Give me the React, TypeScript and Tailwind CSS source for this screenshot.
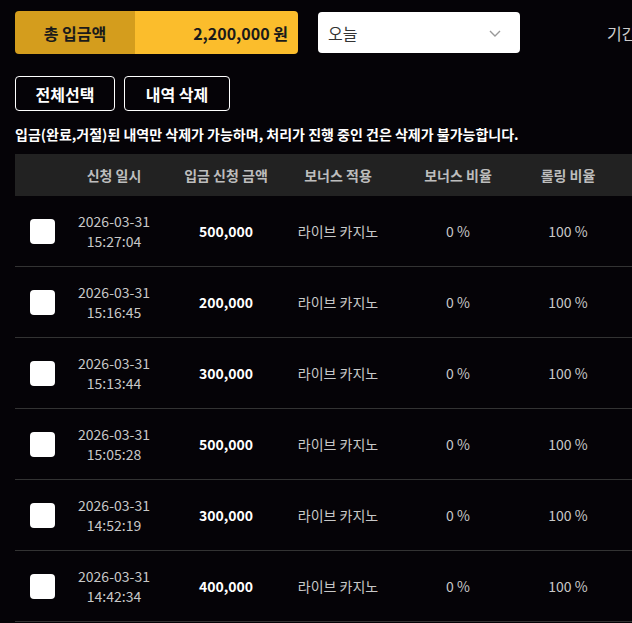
import React from 'react';

const rows = [
  { date: '2026-03-31', time: '15:27:04', amount: '500,000' },
  { date: '2026-03-31', time: '15:16:45', amount: '200,000' },
  { date: '2026-03-31', time: '15:13:44', amount: '300,000' },
  { date: '2026-03-31', time: '15:05:28', amount: '500,000' },
  { date: '2026-03-31', time: '14:52:19', amount: '300,000' },
  { date: '2026-03-31', time: '14:42:34', amount: '400,000' },
];

const font = { fontFamily: '"Noto Sans CJK KR", "Noto Sans", sans-serif' };

export default function App() {
  return (
    <div className="w-[632px] h-[623px] overflow-hidden bg-[#050307] text-white" style={font}>
      <div className="w-[900px] pl-[15px] pt-[11px]">
        {/* Top bar */}
        <div className="flex items-center">
          <div className="flex h-[43px] w-[283px] rounded-[4px] overflow-hidden">
            <div className="flex w-[120px] items-center justify-center bg-[#d49d1d] text-[16px] font-bold text-[#1a1a1a]">
              총 입금액
            </div>
            <div className="flex flex-1 items-center justify-end bg-[#fbbd2c] pr-[10px] text-[16px] font-bold text-[#1a1a1a]">
              2,200,000 원
            </div>
          </div>
          <div className="ml-[20px] flex h-[41px] w-[202px] items-center justify-between rounded-[4px] bg-white pl-[10px] pr-[18px] text-[16px] text-[#333]">
            <span>오늘</span>
            <svg width="14" height="14" viewBox="0 0 14 14" fill="none" stroke="#999" strokeWidth="1.4">
              <path d="M2 5l5 5 5-5" />
            </svg>
          </div>
          <div className="ml-[87px] text-[16px] text-[#ccc]">기간 선택</div>
        </div>

        {/* Buttons */}
        <div className="mt-[22px] flex gap-[9px]">
          <button className="h-[35px] w-[100px] rounded-[4px] border border-white text-[16px] font-bold text-white">
            전체선택
          </button>
          <button className="h-[35px] w-[106px] rounded-[4px] border border-white text-[16px] font-bold text-white">
            내역 삭제
          </button>
        </div>

        <p className="mt-[13px] text-[14px] font-bold leading-[20px] text-white">
          입금(완료,거절)된 내역만 삭제가 가능하며, 처리가 진행 중인 건은 삭제가 불가능합니다.
        </p>

        {/* Table */}
        <div className="mt-[10px]">
          <div className="flex h-[42px] items-center bg-[#222222] text-[14px] font-bold text-[#bdbdbd]">
            <div className="w-[55px]" />
            <div className="w-[88px] text-center">신청 일시</div>
            <div className="w-[122px] pl-[14px] text-center">입금 신청 금액</div>
            <div className="w-[116px] text-center">보너스 적용</div>
            <div className="w-[124px] text-center">보너스 비율</div>
            <div className="w-[96px] text-center">롤링 비율</div>
            <div className="w-[120px] text-center">보너스 금액</div>
          </div>
          {rows.map((r, i) => (
            <div key={i} className="flex h-[71px] items-center border-b border-[#333] text-[14px]">
              <div className="flex w-[55px] justify-center">
                <div className="h-[25px] w-[25px] rounded-[4px] bg-white" />
              </div>
              <div className="w-[88px] text-center leading-[20px] text-[#c8c8c8]">
                <div>{r.date}</div>
                <div>{r.time}</div>
              </div>
              <div className="w-[122px] pl-[14px] text-center font-bold text-white">{r.amount}</div>
              <div className="w-[116px] text-center text-[#c8c8c8]">라이브 카지노</div>
              <div className="w-[124px] text-center text-[#c8c8c8]">0 %</div>
              <div className="w-[96px] text-center text-[#c8c8c8]">100 %</div>
              <div className="w-[120px] text-center text-[#c8c8c8]">0</div>
            </div>
          ))}
        </div>
      </div>
    </div>
  );
}
